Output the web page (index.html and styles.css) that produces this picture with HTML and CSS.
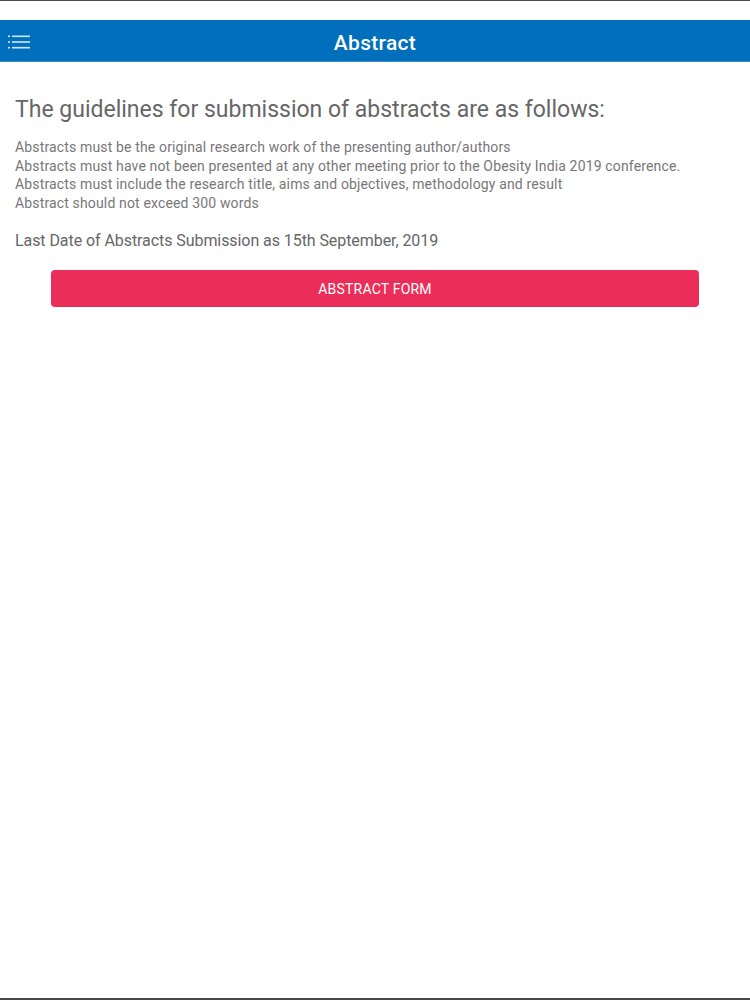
FILE: index.html
```html
<!DOCTYPE html>
<html>
<head>
<meta charset="utf-8">
<link rel="stylesheet" href="styles.css">
</head>
<body>
<div class="topline"></div>
<div class="statusbar"></div>
<header class="navbar">
  <button class="menu" aria-label="Menu">
    <svg width="22" height="14" viewBox="0 0 22 14">
      <g fill="#cfe6fa">
        <rect x="0" y="0.5" width="2" height="1.6"/>
        <rect x="0" y="6.2" width="2" height="1.6"/>
        <rect x="0" y="11.9" width="2" height="1.6"/>
        <rect x="4" y="0.5" width="18" height="1.6"/>
        <rect x="4" y="6.2" width="18" height="1.6"/>
        <rect x="4" y="11.9" width="18" height="1.6"/>
      </g>
    </svg>
  </button>
  <h1 class="title">Abstract</h1>
</header>
<main class="content">
  <h2 class="heading">The guidelines for submission of abstracts are as follows:</h2>
  <div class="rules">
    <p>Abstracts must be the original research work of the presenting author/authors</p>
    <p>Abstracts must have not been presented at any other meeting prior to the Obesity India 2019 conference.</p>
    <p>Abstracts must include the research title, aims and objectives, methodology and result</p>
    <p>Abstract should not exceed 300 words</p>
  </div>
  <p class="lastdate">Last Date of Abstracts Submission as 15th September, 2019</p>
  <div class="actions">
    <button class="form-btn">ABSTRACT FORM</button>
  </div>
</main>
<div class="bottomline"></div>
</body>
</html>
```

FILE: styles.css
```css
html, body {
  margin: 0;
  padding: 0;
  background: #ffffff;
  font-family: Roboto, "Liberation Sans", sans-serif;
}
body {
  height: 1000px;
  display: flex;
  flex-direction: column;
  overflow: hidden;
}
.topline {
  height: 1px;
  background: #4a4a4a;
}
.statusbar {
  height: 19px;
  background: #ffffff;
}
.navbar {
  height: 42px;
  padding-top: 5px;
  background: #016fbb;
  border-bottom: 1px solid #3a8fcf;
  display: flex;
  align-items: center;
  justify-content: center;
  position: relative;
  box-sizing: border-box;
}
.menu {
  position: absolute;
  left: 8px;
  top: 15px;
  background: none;
  border: 0;
  padding: 0;
  line-height: 0;
}
.title {
  margin: 0;
  color: #ffffff;
  font-size: 21px;
  font-weight: 500;
  letter-spacing: 0.3px;
}
.content {
  flex: 1;
  padding: 0 15px;
}
.heading {
  margin: 34px 0 0;
  font-size: 23px;
  font-weight: 400;
  color: #666666;
  line-height: 28px;
}
.rules {
  margin-top: 14px;
}
.rules p {
  margin: 0;
  font-size: 14px;
  line-height: 18.5px;
  letter-spacing: 0.15px;
  color: #777777;
}
.lastdate {
  margin: 19px 0 0;
  font-size: 16px;
  line-height: 20px;
  letter-spacing: -0.07px;
  color: #666666;
}
.actions {
  margin-top: 19px;
  padding: 0 36px;
}
.form-btn {
  width: 100%;
  height: 37px;
  border: 0;
  border-radius: 4px;
  background: #eb2d5a;
  color: #ffffff;
  font-family: Roboto, "Liberation Sans", sans-serif;
  font-size: 14px;
  letter-spacing: 0.2px;
}
.bottomline {
  height: 2px;
  background: #4a4a4a;
}
```
